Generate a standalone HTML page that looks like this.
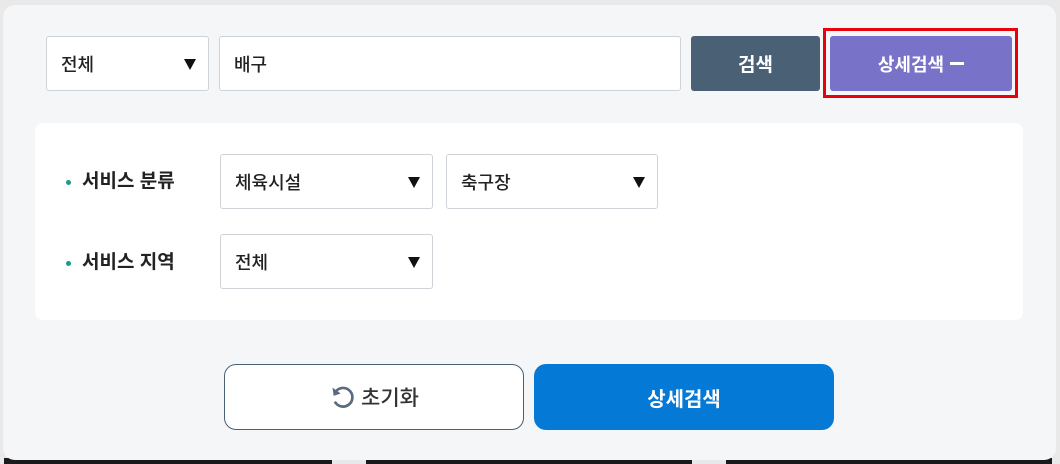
<!DOCTYPE html>
<html><head><meta charset="utf-8"><style>
*{box-sizing:border-box;margin:0;padding:0}
body{width:1060px;height:464px;background:#e9e9ea;position:relative;overflow:hidden;font-family:"Liberation Sans","Noto Sans CJK KR",sans-serif;color:#222}
.strip{position:absolute;top:458px;height:6px;background:#1a1a1a}
.panel{position:absolute;left:3px;top:5px;width:1053px;height:455px;background:#f5f6f8;border-radius:12px}
.sel,.inp{position:absolute;background:#fff;border:1px solid #cfd3d8;border-radius:3px;font-size:18px;font-weight:500;padding-left:14px;display:flex;align-items:center}
.sel::after{content:"";position:absolute;right:12px;top:50%;margin-top:-5px;border-left:6px solid transparent;border-right:6px solid transparent;border-top:11px solid #111}
.btn{position:absolute;display:flex;align-items:center;justify-content:center;color:#fff;font-size:19px;font-weight:bold}
.box{position:absolute;left:35px;top:123px;width:988px;height:197px;background:#fff;border-radius:8px}
.lbl{position:absolute;left:66px;font-size:19px;font-weight:bold;display:flex;align-items:center;line-height:20px}
.lbl::before{content:"";width:5px;height:5px;border-radius:50%;background:#1a9a8c;margin-right:11px}
</style></head><body>
<div class="strip" style="left:4px;width:328px"></div>
<div class="strip" style="left:366px;width:326px"></div>
<div class="strip" style="left:726px;width:326px"></div>
<div class="panel"></div>
<div class="sel" style="left:46px;top:36px;width:163px;height:55px">전체</div>
<div class="inp" style="left:219px;top:36px;width:462px;height:55px">배구</div>
<div class="btn" style="left:691px;top:36px;width:129px;height:55px;background:#4a6075;border-radius:3px">검색</div>
<div style="position:absolute;left:823px;top:28px;width:195px;height:70px;border:3px solid #e8000b"></div>
<div class="btn" style="left:830px;top:36px;width:182px;height:55px;background:#7872c8;border-radius:3px;font-size:18px">상세검색 <span style="display:inline-block;width:14px;height:3px;background:#fff;margin-left:6px"></span></div>
<div class="box"></div>
<div class="lbl" style="top:172px">서비스 분류</div>
<div class="lbl" style="top:253px">서비스 지역</div>
<div class="sel" style="left:220px;top:154px;width:213px;height:55px">체육시설</div>
<div class="sel" style="left:446px;top:154px;width:212px;height:55px">축구장</div>
<div class="sel" style="left:220px;top:234px;width:213px;height:55px">전체</div>
<div class="btn" style="left:224px;top:364px;width:300px;height:66px;background:#fff;border:1px solid #4a6075;border-radius:12px;color:#333;font-weight:500;font-size:21px">
<svg width="28" height="28" viewBox="0 0 24 24" style="margin-right:4px"><path d="M6 7A8 8 0 1 1 5 16" fill="none" stroke="#5a6b7d" stroke-width="2.3"/><path d="M3 4L4 11L10 9Z" fill="#5a6b7d"/></svg>초기화</div>
<div class="btn" style="left:534px;top:364px;width:300px;height:66px;background:#0479d6;border-radius:12px;font-size:20px">상세검색</div>
</body></html>
